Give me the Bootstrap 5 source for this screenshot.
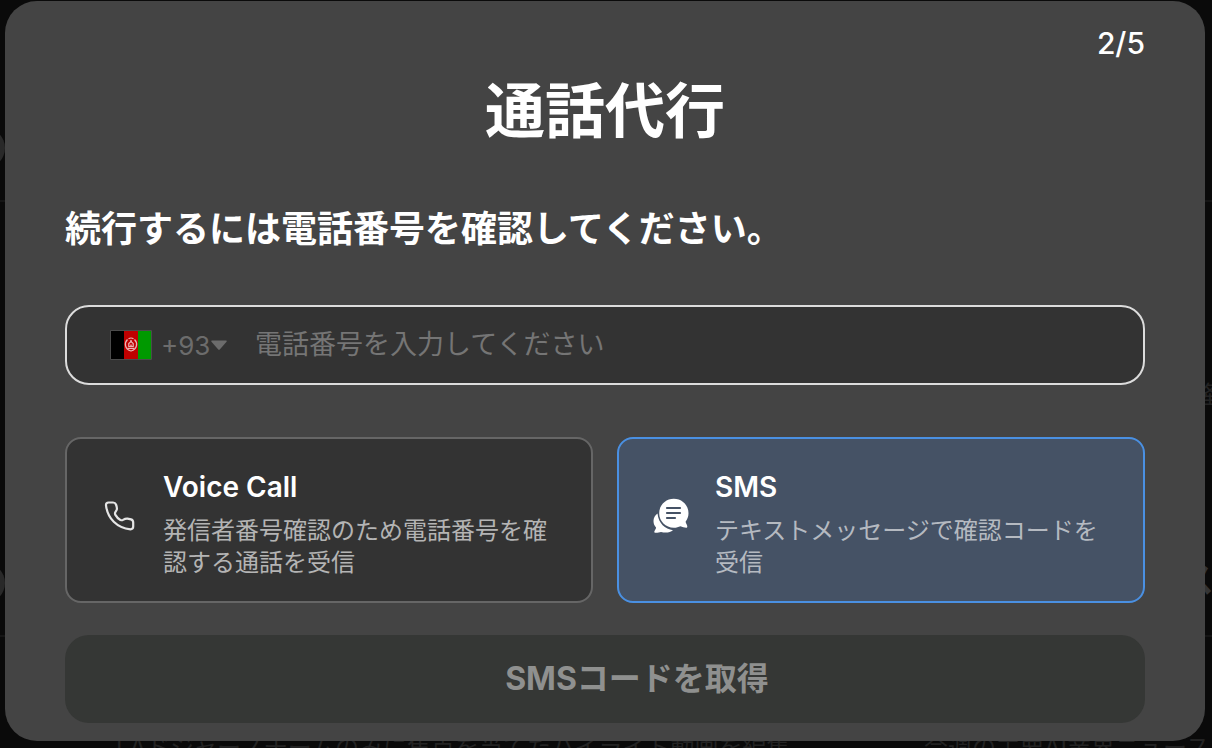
<!DOCTYPE html>
<html lang="ja" data-bs-theme="dark">
<head>
<meta charset="utf-8">
<meta name="viewport" content="width=device-width, initial-scale=1">
<title>通話代行</title>
<link href="https://cdn.jsdelivr.net/npm/bootstrap@5.3.0/dist/css/bootstrap.min.css" rel="stylesheet">
<style>
  body { background: #0a0a0a; color: #fff; font-family: Inter, "Noto Sans CJK JP", sans-serif; }
  .stage { min-height: 100vh; padding: 1px 7px 7px 5px; }
  .dialog-panel { background: #444; border-radius: 32px; padding: 22px 60px 18px; z-index: 1; }
  .step { font-size: 30px; line-height: 40px; font-weight: 500; }
  .dialog-title { font-size: 60px; line-height: 72px; font-weight: 700; margin: 12px 0 0; }
  .dialog-lead { font-size: 36px; line-height: 48px; font-weight: 700; margin: 58px 0 0; }
  .phone-field { margin-top: 52px; height: 80px; border: 2px solid #dcdcdc; border-radius: 24px; background: #333; padding: 0 43px; color: #6c6c6c; }
  .phone-field .code { appearance: none; border: 0; background: transparent; color: inherit; font-size: 26px; width: 50px; padding: 0; margin-left: 9px; }
  .phone-field input { border: 0; outline: 0; background: transparent; color: #fff; font-size: 27px; line-height: 40px; padding: 0; margin-left: 28px; min-width: 0; }
  .phone-field input::placeholder { color: #757575; opacity: 1; }
  .methods { margin-top: 52px; gap: 24px; }
  .method { flex: 1 1 0; border: 2px solid #666; border-radius: 16px; background: #333; color: #fff; padding: 28px 36px 22px 32px; gap: 22px; }
  .method.active { border-color: #4a90e2; background: #455265; }
  .method svg { margin-bottom: 8px; }
  .method-name { font-size: 28px; line-height: 40px; font-weight: 600; }
  .method-note { font-size: 24px; line-height: 32px; color: #b4b4b4; margin-top: 8px; }
  .method.active .method-note { color: #b5bac1; }
  .submit { margin-top: 32px; height: 88px; border: 0; border-radius: 24px; background: #353735; color: #8f908f; font-size: 32px; font-weight: 700; padding: 0 0 0 64px; }
  .behind { color: #232323; white-space: nowrap; font-size: 24px; line-height: 32px; }
  .behind-feed { left: 116px; top: 732px; }
  .behind-news { left: 924px; top: 732px; }
  .dot { width: 40px; height: 40px; left: -35px; background: #292929; }
  .dot-a { top: 128px; }
  .dot-b { top: 563px; }
  .rule { height: 2px; background: #151515; }
  .rule-a { top: 200px; }
  .rule-b { top: 635px; }
  .behind-label { left: 1194px; top: 379px; }
  .behind-head { left: 1178px; top: 558px; font-size: 36px; line-height: 44px; font-weight: 700; color: #353535; }
</style>
</head>
<body>
<div class="stage position-relative overflow-hidden">
  <div aria-hidden="true">
    <div class="rule rule-a position-absolute start-0 end-0"></div>
    <div class="rule rule-b position-absolute start-0 end-0"></div>
    <div class="dot dot-a position-absolute rounded-circle"></div>
    <div class="dot dot-b position-absolute rounded-circle"></div>
    <div class="behind behind-label position-absolute">隆</div>
    <div class="behind behind-head position-absolute">ス</div>
    <div class="behind behind-feed position-absolute">LAドジャースチームのみに焦点を当てたハイライト動画を編集</div>
    <div class="behind behind-news position-absolute">今週の主要AI業界ニュース</div>
  </div>

  <main class="dialog-panel position-relative" role="dialog" aria-labelledby="title">
    <div class="step text-end">2/5</div>
    <h1 id="title" class="dialog-title text-center">通話代行</h1>
    <h2 class="dialog-lead">続行するには電話番号を確認してください。</h2>

    <form>
      <div class="phone-field d-flex align-items-center">
        <svg class="flex-shrink-0" width="42" height="30" viewBox="0 0 42 30" aria-hidden="true">
          <rect width="42" height="30" rx="1" fill="#4b4b4b"/>
          <path d="M1 1h13v28H1z" fill="#000"/>
          <path d="M14 1h14v28H14z" fill="#bf0000"/>
          <path d="M28 1h13v28H28z" fill="#009900"/>
          <g fill="none" stroke="#e8b5b5">
            <path d="M17.500 9.500c-3.500 3.500-2.800 9.500 3.500 11.500 6.300-2 7-8 3.500-11.500" stroke-width="1.300"/>
            <path d="M18.500 8.700q2.500-1.400 5 0M17.500 18.300h7M18.800 16.500v-3l2.200-2 2.200 2v3z" stroke-width="1.200"/>
            <path d="M21 10v2M21 14.500v2" stroke-width="1.400"/>
          </g>
        </svg>
        <label class="visually-hidden" for="code">国番号</label>
        <select id="code" class="code"><option>+93</option></select>
        <svg class="flex-shrink-0" width="16" height="10" viewBox="0 0 16 10" aria-hidden="true"><path d="M1 .5h14c1 0 1 .7.500 1.300L9 9.200q-1 1-2 0L.500 1.800C0 1.200 0 .5 1 .5z" fill="#6c6c6c"/></svg>
        <label class="visually-hidden" for="phone">電話番号</label>
        <input id="phone" type="tel" class="flex-grow-1" placeholder="電話番号を入力してください">
      </div>

      <div class="methods d-flex">
        <button type="button" class="method d-flex align-items-center text-start" aria-pressed="false">
          <svg class="flex-shrink-0" width="42" height="42" viewBox="0 0 42 42" fill="none" stroke="#e6e6e6" stroke-width="2.200" stroke-linejoin="round" aria-hidden="true">
            <path d="M9.500 4.500h4.500c1.500 0 2.500.7 3 2 1 2.500 1.300 4 .6 5.500l-1.300 2.300c-.5 1-.4 1.700.1 2.600 1.200 2.200 2.700 3.800 5 5 .9.500 1.700.5 2.600 0 2-1.200 3-1.500 4.500-1.300l3.500.8c1.500.5 2.200 1.500 2.200 3v4.200c0 1.600-1 2.700-2.700 2.700C18 30 8.500 20.500 7 7.300 6.800 5.700 7.900 4.500 9.500 4.500z"/>
          </svg>
          <span>
            <span class="method-name d-block">Voice Call</span>
            <span class="method-note d-block">発信者番号確認のため電話番号を確認する通話を受信</span>
          </span>
        </button>
        <button type="button" class="method active d-flex align-items-center text-start" aria-pressed="true">
          <svg class="flex-shrink-0" width="42" height="42" viewBox="0 0 42 42" aria-hidden="true">
            <path d="M6.500 15.500C4 17 2.500 20 2.500 23c0 3 1 4.500 2.500 6.500.5 1-2.500 4-1.500 5 1.500 1 5-.5 6.500-.6 4 1 9 1 12-1.700C14 31 7.500 25.500 6.500 15.500z" fill="#fff"/>
            <path d="M22.800.8c8.200 0 14.700 6.400 14.700 14.400 0 3.500-1.200 6-2.800 8.300-.6 1 2.600 4.500 1.300 6-1 .9-4.500-.8-6.500-1.300-2 .9-4 1.500-6.700 1.500-8.100 0-14.600-6.500-14.600-14.500S14.700.8 22.800.8z" fill="#fff"/>
            <path d="M16 10h13M16 15h13M16 20h8" stroke="#455265" stroke-width="2.200" stroke-linecap="round"/>
          </svg>
          <span>
            <span class="method-name d-block">SMS</span>
            <span class="method-note d-block">テキストメッセージで確認コードを受信</span>
          </span>
        </button>
      </div>

      <button type="submit" class="submit w-100" disabled>SMSコードを取得</button>
    </form>
  </main>
</div>
<script src="https://cdn.jsdelivr.net/npm/bootstrap@5.3.0/dist/js/bootstrap.bundle.min.js"></script>
</body>
</html>
